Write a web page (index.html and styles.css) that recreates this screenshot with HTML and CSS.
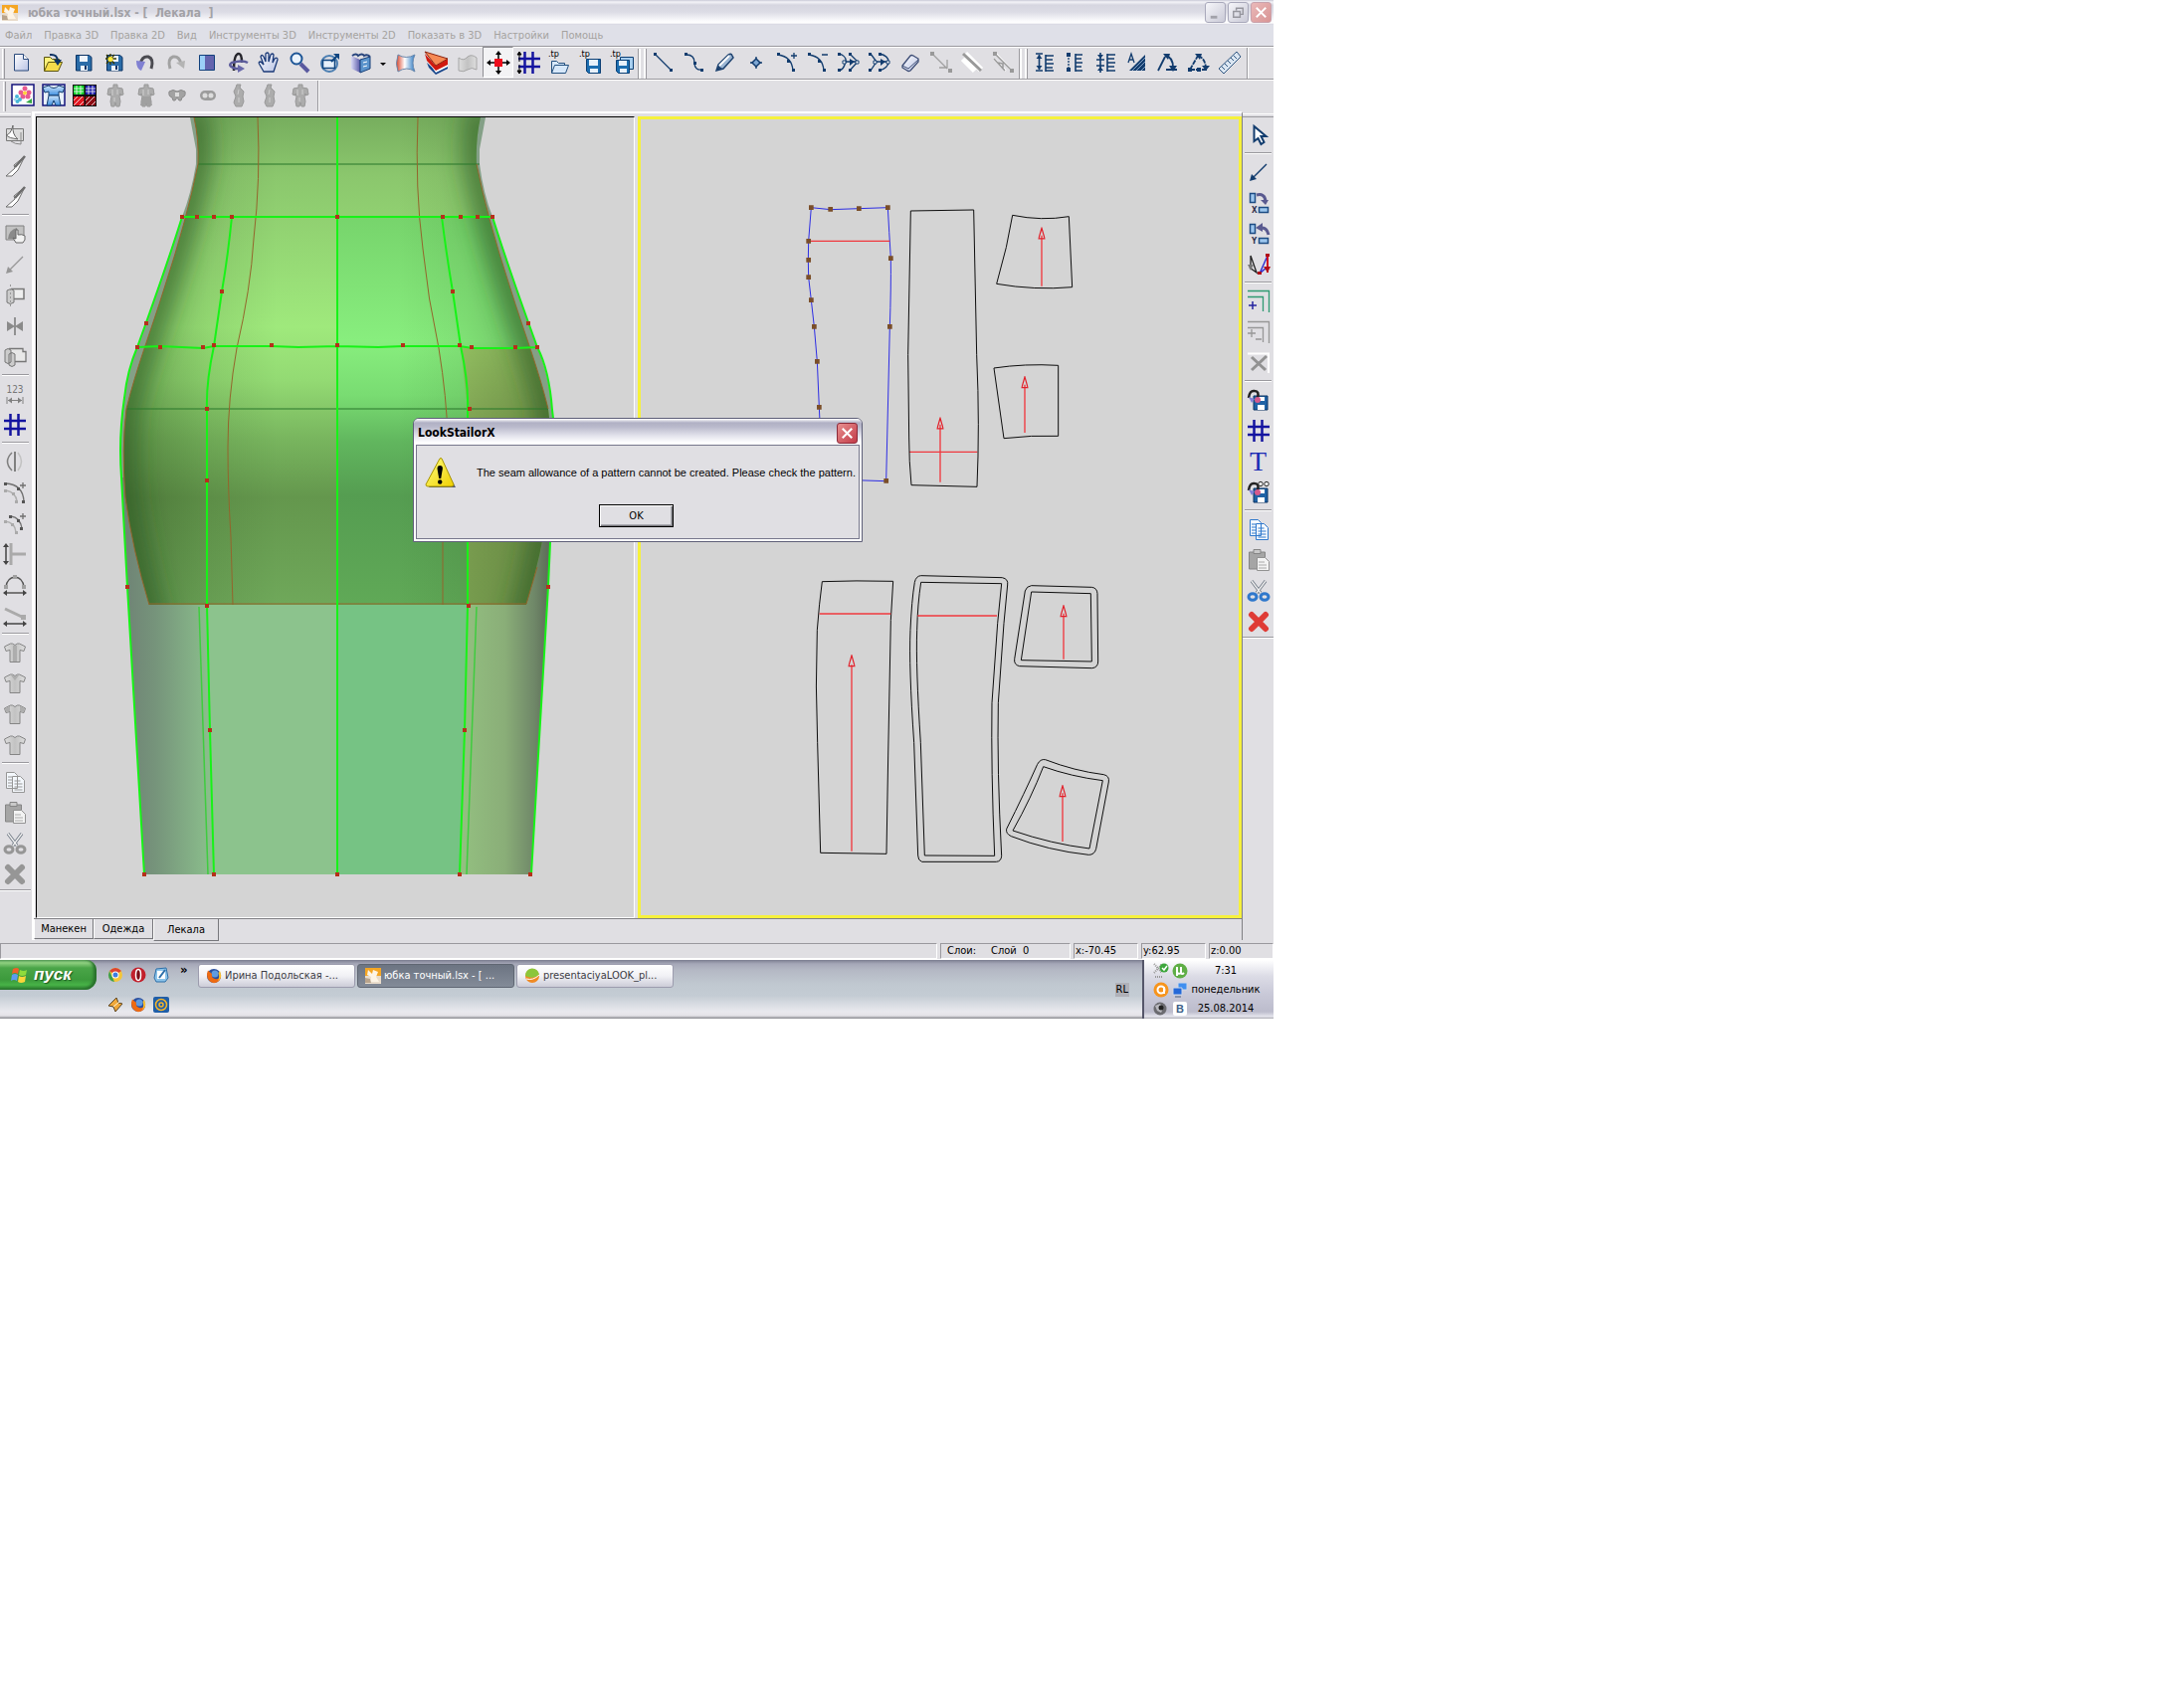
FILE: index.html
```html
<!DOCTYPE html>
<html lang="ru">
<head>
<meta charset="utf-8">
<title>юбка точный.lsx - [ Лекала ]</title>
<link rel="stylesheet" href="styles.css">
</head>
<body>
<svg class="defs" aria-hidden="true">
  <defs>
    <linearGradient id="g-page" x1="0" y1="0" x2="1" y2="1"><stop offset="0" stop-color="#fff"/><stop offset="1" stop-color="#b9c3e4"/></linearGradient>
    <linearGradient id="g-violet" x1="0" y1="0" x2="1" y2="0"><stop offset="0" stop-color="#d8d8f4"/><stop offset="1" stop-color="#5a5aa8"/></linearGradient>
    <linearGradient id="g-heat" x1="0" y1="0" x2="1" y2="0"><stop offset="0" stop-color="#d8452c"/><stop offset=".45" stop-color="#fff"/><stop offset="1" stop-color="#2b78c2"/></linearGradient>
    <linearGradient id="g-blue" x1="0" y1="0" x2="0" y2="1"><stop offset="0" stop-color="#cfe6fb"/><stop offset="1" stop-color="#3f8fe0"/></linearGradient>
    <linearGradient id="g-gray" x1="0" y1="0" x2="1" y2="0"><stop offset="0" stop-color="#dedede"/><stop offset=".5" stop-color="#c2c2c2"/><stop offset="1" stop-color="#dedede"/></linearGradient>
    <linearGradient id="g-warn" x1="0" y1="0" x2="1" y2="1"><stop offset="0" stop-color="#ffff80"/><stop offset="1" stop-color="#f0cf00"/></linearGradient>
  </defs>
  <symbol id="i-floppy" viewBox="0 0 24 24"><path d="M4.500 4.500h13l2.500 2v13.500h-15.500z" fill="#2a6ca8" stroke="#0b3263"/><path d="M8 5h8v6h-8zM9 15h7v5h-7z" fill="#eef4fb"/><path d="M13 15h2v4h-2z" fill="#0b3263"/></symbol>
  <symbol id="i-shirt" viewBox="0 0 24 24"><path d="M1.500 6l6-3h2q2.500 3 5 0h2l6 3-1.500 4.500-4-1V21.500h-10V9.500L3 10.500z" fill="url(#g-gray)" stroke="#858585"/></symbol>
  <symbol id="i-torso" viewBox="0 0 24 24"><path d="M10 1h4v3l5 1 1 6-3 1v-2l-1 3 1 5-1 5h-3l-1-4-1 4H8l-1-5 1-5-1-3v2l-3-1 1-6 5-1z" fill="#acacac" stroke="#989898"/><path d="M9 6v6M14 6v5M11 14v4" stroke="#cfcfcf" fill="none"/></symbol>
  <symbol id="i-side" viewBox="0 0 24 24"><path d="M10 1h4l-1 3 4 4-1 5 1 5-2 5H9l-2-4 2-6-2-5 2-4z" fill="#acacac" stroke="#989898"/><path d="M12 6l-1 5M12 14v5" stroke="#cfcfcf" fill="none"/></symbol>
  <symbol id="i-grid" viewBox="0 0 24 24"><path d="M1 8h22M1 16h22M7.500 1v22M15.500 1v22" stroke="#1414a0" stroke-width="2.500"/></symbol>
  <symbol id="i-arrow" viewBox="0 0 24 24"><path d="M20 4L6 18" stroke="currentColor" stroke-width="1.300"/><path d="M3 21l2-7 5 5z" fill="currentColor"/></symbol>
  <symbol id="i-copy" viewBox="0 0 24 24"><path d="M3.500 2.500h8l3 3v13h-11zM9.500 6.500h8l4 4v12h-12z" fill="#f4f8fd" stroke="currentColor"/><path d="M5 7h4M5 10h4M5 13h4M5 16h4M11.500 11h6M11.500 14h8M11.500 17h8M11.500 20h8" stroke="currentColor"/></symbol>
  <symbol id="i-paste" viewBox="0 0 24 24"><path d="M2.500 4h16v17h-16z" fill="#a5a5a5" stroke="#858585"/><path d="M7 1.500h7v4H7z" fill="#c9c9c9" stroke="#858585"/><path d="M10.500 9.500h8l4 4v9h-12z" fill="#f3f3f3" stroke="#929292"/><path d="M12 14h6M12 17h8M12 20h8" stroke="#aaa"/></symbol>
  <symbol id="i-cut" viewBox="0 0 24 24"><path d="M5 2l9 12M19 2l-9 12" stroke="#6f7884" stroke-width="3"/><path d="M5 2l9 12M19 2l-9 12" stroke="#eee" stroke-width="1.400"/><ellipse cx="6" cy="18" rx="4" ry="3.200" fill="none" stroke="currentColor" stroke-width="3"/><ellipse cx="18" cy="18" rx="4" ry="3.200" fill="none" stroke="currentColor" stroke-width="3"/></symbol>
  <symbol id="i-cross" viewBox="0 0 24 24"><path d="M5 5l14 14M19 5L5 19" stroke="currentColor" stroke-width="6" stroke-linecap="round"/></symbol>
  <symbol id="i-knife" viewBox="0 0 24 24"><path d="M22 2L11 11l1 3-9 8h6l6-6z" fill="#fff" stroke="#6d6d6d"/><path d="M22 2L12 13" stroke="#6d6d6d" stroke-width="2.500"/></symbol>
  <symbol id="i-fox" viewBox="0 0 16 16"><circle cx="8" cy="8" r="7" fill="#2a4f9e"/><circle cx="9" cy="6" r="3.500" fill="#5f9be0"/><path d="M1 6Q1 14 8 15.300q7-.8 7.300-8Q13 12 9 11q-4-1-3-5L2 2.500z" fill="#ee6a12"/><path d="M14 3q3 7-2 10 2-4 .5-8z" fill="#fbc02d"/></symbol>
  <symbol id="i-app" viewBox="0 0 16 16"><path d="M0 0h16v8H0z" fill="#f5a623"/><path d="M0 8h16v8H0z" fill="#e9dccb"/><path d="M3 2l4 4 1-4 5 2-2 5 3 5H5l1-5-4-2z" fill="#fdf4e6"/><path d="M0 10l5 1 1 4H0z" fill="#b9a48c"/></symbol>
  <symbol id="i-seamset" viewBox="0 0 24 24"><path d="M7 8h14v14H7z" fill="#1f62a5" stroke="#0b3263"/><path d="M12 9h6v4h-6zM11 17h7v5h-7z" fill="#fff"/><path d="M2 10Q3 2 8 3q5 0 3 7" stroke="#222" stroke-width="2.500" fill="none"/><path d="M2 9l3 6 3-4z" fill="#8080d8"/><circle cx="11" cy="12" r="3" fill="#d55a8c"/></symbol>
  <symbol id="i-up" viewBox="0 0 24 60"><path d="M12 3L2 38h20z" fill="none" stroke="#e2202a" stroke-width="4"/></symbol>
</svg>

<div class="screen">
<div class="desktop">

  <header class="titlebar">
    <svg class="s16" viewBox="0 0 16 16"><use href="#i-app"/></svg>
    <h1 class="title">юбка точный.lsx - [  Лекала  ]</h1>
    <div class="winbtns">
      <button class="winbtn" aria-label="Свернуть"><svg viewBox="0 0 20 20"><path d="M5 15h7" stroke="#a2a2aa" stroke-width="3"/></svg></button>
      <button class="winbtn" aria-label="Восстановить"><svg viewBox="0 0 20 20"><path d="M8 8V5.500h7V12h-3M5 9h7v6H5z" fill="none" stroke="#96969e" stroke-width="1.500"/></svg></button>
      <button class="winbtn winbtn-close" aria-label="Закрыть"><svg viewBox="0 0 20 20"><path d="M5 5l10 10M15 5L5 15" stroke="#fff" stroke-width="2"/></svg></button>
    </div>
  </header>

  <nav class="menubar">
    <button>Файл</button><button>Правка 3D</button><button>Правка 2D</button><button>Вид</button><button>Инструменты 3D</button><button>Инструменты 2D</button><button>Показать в 3D</button><button>Настройки</button><button>Помощь</button>
  </nav>

  <div class="toolbar" role="toolbar" aria-label="Стандартная">
    <span class="grip"></span>
    <button class="tb" aria-label="Новый"><svg viewBox="0 0 24 24"><path d="M4.500 3.500h9l5 5v11.500h-14z" fill="url(#g-page)" stroke="#2a4a7c"/><path d="M13.500 3.500v5h5" fill="#fff" stroke="#2a4a7c"/></svg></button>
    <button class="tb" aria-label="Открыть"><svg viewBox="0 0 24 24"><path d="M3.500 20V6.500h6l2 2h7v3" fill="#fff27a" stroke="#5b5510"/><path d="M3.500 20.500l4-9h14l-4 9z" fill="#f5dc4a" stroke="#5b5510"/><path d="M9 4q8-1 8 7" fill="none" stroke="#0b3263" stroke-width="2"/><path d="M13 9h8l-4 6z" fill="#0b3263"/></svg></button>
    <button class="tb" aria-label="Сохранить"><svg viewBox="0 0 24 24"><use href="#i-floppy"/></svg></button>
    <button class="tb" aria-label="Сохранить как"><svg viewBox="0 0 24 24"><use href="#i-floppy"/><path d="M8 3v11M3 8h11M4 4l8 9M12 4l-8 9" stroke="#3a3a00" stroke-width="1.300"/><circle cx="8" cy="8.500" r="2.500" fill="#ffe93a"/></svg></button>
    <button class="tb" aria-label="Отменить"><svg viewBox="0 0 24 24"><path d="M7 13Q9 5 15 6q6 2 3 12" fill="none" stroke="#4a4a50" stroke-width="3"/><path d="M3 10l9 1-4 9q-5-2-5-10z" fill="#8080d2"/></svg></button>
    <button class="tb" aria-label="Вернуть"><svg viewBox="0 0 24 24"><path d="M17 13Q15 5 9 6q-6 2-3 12" fill="none" stroke="#a2a2a2" stroke-width="3"/><path d="M21 10l-9 2 8 6z" fill="#b4b4b4"/></svg></button>
    <button class="tb" aria-label="Окна"><svg viewBox="0 0 24 24"><path d="M4.500 4.500h15v15h-15z" fill="#6464ae" stroke="#12407c"/><path d="M5 5h5v14H5z" fill="#9bd0f8"/></svg></button>
    <button class="tb" aria-label="Вращать"><svg viewBox="0 0 24 24"><path d="M8 20Q8 3 13 3q3 0 3 9" fill="none" stroke="#25252c" stroke-width="2.500"/><path d="M22 12q-5-3-16 0-5 3 4 6h4" fill="none" stroke="#5c5c9c" stroke-width="2.500"/><path d="M12 14v8l7-4z" fill="#6868aa"/></svg></button>
    <button class="tb" aria-label="Сдвиг"><svg viewBox="0 0 24 24"><path d="M7 21l-4-7q-2-3 1-3l3 3-3-8q1-3 3 0l2 5V3q2-2 3 0v8l2-7q2-2 3 0l-1 8 2-4q3-2 3 1l-4 12z" fill="url(#g-page)" stroke="#1b3a78" stroke-width="1.300"/></svg></button>
    <button class="tb" aria-label="Масштаб"><svg viewBox="0 0 24 24"><path d="M13 13l8 8" stroke="#59599f" stroke-width="4"/><circle cx="9" cy="8" r="5.500" fill="#eaf3fc" stroke="#1d5596" stroke-width="2"/></svg></button>
    <button class="tb" aria-label="Показать всё"><svg viewBox="0 0 24 24"><circle cx="11" cy="13" r="8" fill="none" stroke="#4c7fb2" stroke-width="2"/><path d="M4.500 9.500h12v8h-12z" fill="#e6f0fb" stroke="#0f4580" stroke-width="1.500"/><path d="M13 11l7-7" stroke="#0f4580" stroke-width="2"/><path d="M15 3h6v6z" fill="#0f4580"/></svg></button>
    <button class="tb" aria-label="Вид модели"><svg viewBox="0 0 24 24"><path d="M2 5l9 4v13l-9-4z" fill="url(#g-violet)"/><path d="M11 9l10-3v12l-10 4z" fill="#5b94cc" stroke="#173f78"/><path d="M3 5q4-3 6 0 4-3 6 0 3-2 6 1" fill="none" stroke="#26437c" stroke-width="2"/><path d="M14 12l4-1M14 16l4-1" stroke="#fff"/></svg></button>
    <button class="tb tb-drop" aria-label="Выбрать вид"><svg viewBox="0 0 14 24"><path d="M4 12h6l-3 3z" fill="#000"/></svg></button>
    <button class="tb" aria-label="Ткань"><svg viewBox="0 0 24 24"><path d="M4 4q8 5 17 0-4 8 0 17-8-6-17 0-3-8 0-17z" fill="url(#g-heat)" stroke="#6a88ac"/></svg></button>
    <button class="tb" aria-label="Слои"><svg viewBox="0 0 24 24"><path d="M2 12l9 8 12-5v3l-12 6L4 17z" fill="#17458a"/><path d="M2 9l9 9 12-5v3l-12 6z" fill="#fff"/><path d="M0 3l11 12 12-7v6l-12 6L2 10z" fill="#d0190f"/><path d="M0 1l23 7-12 7z" fill="#f68a55" stroke="#8c2410"/></svg></button>
    <button class="tb" aria-label="Полотно"><svg viewBox="0 0 24 24"><path d="M3 7q5 4 9-1 4-3 9 1v12q-5-3-9 0-4 3-9 1z" fill="url(#g-gray)" stroke="#a6a6a6"/></svg></button>
    <button class="tb tb-on" aria-label="Точки" aria-pressed="true"><svg viewBox="0 0 24 24"><path d="M12 2v20M2 12h20" stroke="#000" stroke-width="1.500"/><path d="M12 0l3 4H9zM12 24l3-4H9zM0 12l4-3v6zM24 12l-4-3v6z" fill="#000"/><path d="M8 8h8v8H8z" fill="#ee0c1c"/></svg></button>
    <button class="tb" aria-label="Сетка"><svg viewBox="0 0 24 24"><use href="#i-grid"/><path d="M2 2v9M2 14v8M0 4l2-3 2 3zM0 20l2 3 2-3z" stroke="#000" fill="#000"/></svg></button>
    <button class="tb" aria-label="Открыть tp"><svg viewBox="0 0 24 24"><text x="0" y="6" class="tp">.tp</text><path d="M3.500 22V10.500h5l2 2h6v2M3.500 22.500l3-8h14l-3 8z" fill="#d7e8fa" stroke="#23507f"/></svg></button>
    <button class="tb" aria-label="Сохранить tp"><svg viewBox="0 0 24 24"><text x="0" y="6" class="tp">.tp</text><path d="M7.500 8.500h14v14h-12l-2-2z" fill="#1c6eb0" stroke="#0b3f74"/><path d="M10 9h9v6h-9zM11 18h8v4h-8z" fill="#e8f1fa"/></svg></button>
    <button class="tb" aria-label="Сохранить tp как"><svg viewBox="0 0 24 24"><text x="0" y="6" class="tp">.tp</text><path d="M10.500 6.500h13v12h-13z" fill="#a7cff0" stroke="#0b3f74"/><path d="M6.500 9.500h13v13h-11l-2-2z" fill="#1c6eb0" stroke="#0b3f74"/><path d="M9 10h8v5H9zM10 18h7v4h-7z" fill="#e8f1fa"/></svg></button>
    <span class="divider"></span>
    <button class="tb" aria-label="Линия"><svg viewBox="0 0 24 24"><path d="M4 4l15 15" stroke="#123c6e" stroke-width="1.300"/><path d="M2 2h3v3H2zM18 18h3v3h-3z" fill="#123c6e"/></svg></button>
    <button class="tb" aria-label="Кривая"><svg viewBox="0 0 24 24"><path d="M4 4q8 0 8 8t8 7" fill="none" stroke="#123c6e" stroke-width="1.300"/><path d="M2 2h3v3H2zM11 11h3v3h-3zM18 18h3v3h-3z" fill="#123c6e"/></svg></button>
    <button class="tb" aria-label="Карандаш"><svg viewBox="0 0 24 24"><path d="M3 20l2-6L15 4q3-2 4 1l1 2L10 18z" fill="#9cb6d3" stroke="#1c416e" stroke-width="1.500"/><path d="M6 15L16 5" stroke="#fff" stroke-width="2"/><path d="M3 20l2-5 4 3z" fill="#1c416e"/></svg></button>
    <button class="tb" aria-label="Точка"><svg viewBox="0 0 24 24"><path d="M12 6v12M6 12h12" stroke="#123c6e" stroke-width="1.300"/><path d="M12 8l4 4-4 4-4-4z" fill="#7fa8d4" stroke="#123c6e" stroke-width="1.500"/></svg></button>
    <button class="tb" aria-label="Добавить точку"><svg viewBox="0 0 24 24"><path d="M3 4q14 2 15 16M19 2v6M16 5h6" fill="none" stroke="#123c6e" stroke-width="1.300"/><path d="M2 2h3v3H2zM12 9h3v3h-3zM17 18h3v3h-3z" fill="#123c6e"/></svg></button>
    <button class="tb" aria-label="Удалить точку"><svg viewBox="0 0 24 24"><path d="M3 4q14 2 15 16M16 4h6" fill="none" stroke="#123c6e" stroke-width="1.300"/><path d="M2 2h3v3H2zM12 9h3v3h-3zM17 18h3v3h-3z" fill="#123c6e"/></svg></button>
    <button class="tb" aria-label="Соединить"><svg viewBox="0 0 24 24"><path d="M3 3q9 4 5 11-1 4-5 6M13 3l8 8-8 9M8 11h11" fill="none" stroke="#123c6e" stroke-width="1.300"/><path d="M1 2h3v3H1zM1 18h3v3H1zM12 2h3v3h-3zM12 18h3v3h-3zM13 8l5 3-5 4z" fill="#123c6e"/><path d="M6 10h3v3H6zM19 10h3v3h-3z" fill="#fff" stroke="#123c6e"/></svg></button>
    <button class="tb" aria-label="Сгладить"><svg viewBox="0 0 24 24"><path d="M3 3l6 8-6 9M12 3q9 2 9 8t-9 9M8 11h11" fill="none" stroke="#123c6e" stroke-width="1.300"/><path d="M1 2h3v3H1zM1 18h3v3H1zM11 2h3v3h-3zM11 18h3v3h-3zM13 8l5 3-5 4z" fill="#123c6e"/><path d="M6 10h3v3H6zM19 10h3v3h-3z" fill="#fff" stroke="#123c6e"/></svg></button>
    <button class="tb" aria-label="Ластик"><svg viewBox="0 0 24 24"><path d="M4 15l8-10q1-1 3 0l5 3v3l-8 9q-2 1-3 0l-5-3z" fill="url(#g-page)" stroke="#3c4c74" stroke-width="1.300"/><path d="M4 15l6 3 10-9" fill="none" stroke="#3c4c74"/></svg></button>
    <button class="tb" aria-label="Стрелка"><svg viewBox="0 0 24 24"><path d="M4 4l14 14M10 17h8v-8" fill="none" stroke="#a0a0a0" stroke-width="1.300"/><path d="M1 1h4v4H1zM19 18h4v4h-4z" fill="#999"/></svg></button>
    <button class="tb" aria-label="Отрезок"><svg viewBox="0 0 24 24"><path d="M5 3l16 16M3 8l12 12" stroke="#fff" stroke-width="6"/><path d="M3 3l18 17" stroke="#999" stroke-width="3"/></svg></button>
    <button class="tb" aria-label="Параллель"><svg viewBox="0 0 24 24"><path d="M5 3l16 17M3 8l12 12" stroke="#fff" stroke-width="2"/><path d="M4 3l17 17M3 8l11 12M7 12l5 1v5" fill="none" stroke="#999" stroke-width="1.500"/><path d="M2 1h4v4H2zM19 18h4v4h-4z" fill="#999"/></svg></button>
    <span class="divider"></span>
    <button class="tb" aria-label="Длина"><svg viewBox="0 0 24 24"><path d="M3 3h7M3 20h7M6.500 4v15M13 4v17M13 5h8M13 9h7M13 13h8M13 17h7M13 20h8" stroke="#123c6e" stroke-width="1.600"/><path d="M3.500 8l3-4 3 4zM3.500 15l3 4 3-4z" fill="#123c6e"/></svg></button>
    <button class="tb" aria-label="Расстояние"><svg viewBox="0 0 24 24"><path d="M5 4v15" stroke="#123c6e" stroke-width="1.300" stroke-dasharray="2 1"/><path d="M3 2h4v4H3zM3 17h4v4H3z" fill="#123c6e"/><path d="M12 3v18M12 4h7M12 8h6M12 12h7M12 16h6M12 20h7" stroke="#123c6e" stroke-width="1.600"/></svg></button>
    <button class="tb" aria-label="Разница"><svg viewBox="0 0 24 24"><path d="M2 9h8M2 15h8M6 2v20M13 3v18M13 4h8M13 8h7M13 12h8M13 16h7M13 20h8" stroke="#123c6e" stroke-width="1.600"/><path d="M3 4l3 4 3-4zM3 20l3-4 3 4z" fill="#123c6e"/></svg></button>
    <button class="tb" aria-label="Площадь"><svg viewBox="0 0 24 24"><path d="M20 4v16H4z" fill="#123c6e"/><path d="M11 20l9-9M7 20L20 7M16 20l4-4" stroke="#86a5c8"/><path d="M3 12l3-9 3 9M4 9h4" fill="none" stroke="#123c6e" stroke-width="1.300"/></svg></button>
    <button class="tb" aria-label="Угол"><svg viewBox="0 0 24 24"><path d="M2 20L9 6M10 19h11M9 5q8 1 8 12" fill="none" stroke="#123c6e" stroke-width="1.800"/><path d="M7 3l7 0-2 6zM13 15h8l-4 6z" fill="#123c6e"/></svg></button>
    <button class="tb" aria-label="Сумма углов"><svg viewBox="0 0 24 24"><path d="M3 19L11 5M3 19h18M11 5q7 2 8 12" fill="none" stroke="#123c6e" stroke-width="1.800" stroke-dasharray="5 1"/><path d="M8 3h7l-2 6zM15 15h8l-4 5zM1 17h4v4H1zM10 17h4v4h-4z" fill="#123c6e"/></svg></button>
    <button class="tb" aria-label="Линейка"><svg viewBox="0 0 24 24"><path d="M1 18L19 1l4 5L6 23z" fill="#dbe6f2" stroke="#2f5680"/><path d="M4 16l3 3M7 13l3 3M10 10l3 3M13 7l3 3M16 5l3 3" stroke="#2f5680"/></svg></button>
    <span class="edge"></span>
  </div>

  <div class="toolbar toolbar-second" role="toolbar" aria-label="Отображение">
    <span class="grip"></span>
    <button class="tb" aria-label="Текстура"><svg viewBox="0 0 24 24"><path d="M1 1h22v21H1z" fill="#fff" stroke="#14147c" stroke-width="1.500"/><circle cx="14" cy="5" r="2.500" fill="#e85a90"/><circle cx="18" cy="9" r="2.500" fill="#e85a90"/><circle cx="10" cy="9" r="2.500" fill="#e85a90"/><circle cx="17" cy="13" r="2.500" fill="#e85a90"/><circle cx="12" cy="13" r="2.500" fill="#e85a90"/><circle cx="14" cy="9.500" r="2" fill="#ffd23a"/><circle cx="6" cy="13" r="2" fill="#48b6d8"/><circle cx="9" cy="16" r="2" fill="#48b6d8"/><circle cx="4" cy="16" r="1.500" fill="#9fd8ec"/><circle cx="6.500" cy="18" r="2" fill="#48b6d8"/><path d="M15 19l6-4v5z" fill="#35a845"/></svg></button>
    <button class="tb" aria-label="Костюм"><svg viewBox="0 0 24 24"><path d="M1 1h22v21H1z" fill="#e9f1fa" stroke="#14147c" stroke-width="1.500"/><path d="M1 4l6-2q5 5 10 0l6 2-2 5-4-1v4H7V8L3 9z" fill="url(#g-blue)" stroke="#123c6e"/><path d="M7 12h10l2 10h-5l-2-5-2 5H5z" fill="url(#g-blue)" stroke="#123c6e"/></svg></button>
    <button class="tb" aria-label="Сетки"><svg viewBox="0 0 24 24"><path d="M0 1h24v22H0z" fill="#111"/><path d="M1 2h10.500v9H1z" fill="#12d42a"/><path d="M13 2h10v9H13z" fill="#1c1ca8"/><path d="M1 13h10.500v9H1z" fill="#e01822"/><path d="M13 13h10v9H13z" fill="#8c0c14"/><path d="M4 2v9M8 2v9M1 5h10M1 8h10M16 2v9M20 2v9M13 5h10M13 8h10M1 17l4-4M1 22l9-9M7 22l4-4M13 17l4-4M13 22l9-9M19 22l4-4" stroke="#fff" stroke-width=".8"/></svg></button>
    <button class="tb" aria-label="Спереди"><svg viewBox="0 0 24 24"><use href="#i-torso"/></svg></button>
    <button class="tb" aria-label="Сзади"><svg viewBox="0 0 24 24"><use href="#i-torso"/><path d="M8 13h8l2 9h-4l-2-3-2 3H6z" fill="#a0a0a0"/></svg></button>
    <button class="tb" aria-label="Сверху"><svg viewBox="0 0 24 24"><path d="M4 8q4-3 8 0 4-3 8 0 1 5-3 6l-1 3h-2l-2-3-2 3H8l-1-3q-4-1-3-6z" fill="#a2a2a2" stroke="#8b8b8b"/><path d="M10 9h4v4h-4z" fill="#ddd"/></svg></button>
    <button class="tb" aria-label="Снизу"><svg viewBox="0 0 24 24"><rect x="4" y="7" width="16" height="10" rx="5" fill="#9c9c9c"/><circle cx="9" cy="12" r="2.500" fill="#ddd"/><circle cx="15" cy="12" r="2.500" fill="#ddd"/></svg></button>
    <button class="tb" aria-label="Слева"><svg viewBox="0 0 24 24"><use href="#i-side"/></svg></button>
    <button class="tb" aria-label="Справа"><svg viewBox="0 0 24 24"><use href="#i-side"/></svg></button>
    <button class="tb" aria-label="Изометрия"><svg viewBox="0 0 24 24"><use href="#i-torso"/></svg></button>
    <span class="edge"></span>
  </div>

  <div class="work">
    <div class="sidebar sidebar-left" role="toolbar" aria-label="Инструменты 3D">
      <span class="sgrip"></span>
      <button class="tb" aria-label="Плоскость"><svg viewBox="0 0 24 24"><path d="M3.500 5.500h17v12h-17z" fill="#ddd" stroke="#777"/><path d="M10 2q-1 9 5 14-9-1-12-4 5-1 7-10z" fill="#fff" stroke="#666"/><path d="M8 18q4 3 10 3V9" fill="none" stroke="#888"/></svg></button>
      <button class="tb" aria-label="Нож"><svg viewBox="0 0 24 24"><use href="#i-knife"/></svg></button>
      <button class="tb" aria-label="Нож 2"><svg viewBox="0 0 24 24"><use href="#i-knife"/></svg></button>
      <hr>
      <button class="tb" aria-label="Захват"><svg viewBox="0 0 24 24"><path d="M3 4h18v14H3z" fill="#c2c2c2" stroke="#808080"/><path d="M5 17q1-9 9-11v11z" fill="#8a8a8a"/><path d="M13 21l-3-5 3 1V8h2v5q4-1 7 1v4l-2 3z" fill="#f2f2f2" stroke="#666"/></svg></button>
      <button class="tb gray" aria-label="Направление"><svg viewBox="0 0 24 24"><use href="#i-arrow"/></svg></button>
      <button class="tb" aria-label="Развернуть"><svg viewBox="0 0 24 24"><path d="M8 5.500h13v10H11" fill="#eee" stroke="#777" stroke-width="1.500"/><path d="M4 7q4-3 7 0v12q-4 3-7 0z" fill="#ccc" stroke="#777"/><path d="M7.500 1v22" stroke="#999" stroke-dasharray="2 2"/></svg></button>
      <button class="tb" aria-label="Отразить"><svg viewBox="0 0 24 24"><path d="M12 3v18" stroke="#777" stroke-width="1.500"/><path d="M4 7l8 5-8 5zM20 7l-8 5 8 5z" fill="#8a8a8a"/></svg></button>
      <button class="tb" aria-label="Развернуть всё"><svg viewBox="0 0 24 24"><path d="M6 3.500h14v3h3v10H10" fill="#e8e8e8" stroke="#777" stroke-width="1.300"/><path d="M2 5q3-3 6 0v12q-3 3-6 0zM6 9q3-3 6 0v11q-3 3-6 0z" fill="#ccc" stroke="#777"/></svg></button>
      <hr>
      <button class="tb" aria-label="Размер"><svg viewBox="0 0 24 24"><text x="12" y="11" class="num">123</text><path d="M4 15v7M20 15v7M5 18.500h14" stroke="#808080"/><path d="M5 18.500l4-3v6zM19 18.500l-4-3v6z" fill="#808080"/></svg></button>
      <button class="tb" aria-label="Сетка 3D"><svg viewBox="0 0 24 24"><use href="#i-grid"/></svg></button>
      <hr>
      <button class="tb" aria-label="Симметрия"><svg viewBox="0 0 24 24"><path d="M12 2v20" stroke="#808080" stroke-width="2"/><path d="M9 3q-9 9 0 18" fill="none" stroke="#808080" stroke-width="1.500"/><path d="M15 3q7 9 0 18" fill="none" stroke="#c2c2c2" stroke-width="1.500"/></svg></button>
      <button class="tb" aria-label="Точка на кривой"><svg viewBox="0 0 24 24"><path d="M3 3q17 1 18 18M17 5h6M20 2v6" fill="none" stroke="#707070" stroke-width="1.300"/><path d="M3 10q10 2 11 11" fill="none" stroke="#b0b0b0" stroke-width="1.500"/><path d="M1 2h3v3H1zM14 7h3v3h-3zM19 20h3v3h-3z" fill="#555"/><path d="M1 9h3v3H1zM9 12h3v3H9zM12 20h3v3h-3z" fill="#aaa"/></svg></button>
      <button class="tb" aria-label="Точка внутри"><svg viewBox="0 0 24 24"><path d="M8 5q9 1 11 12M17 5h6M20 2v6" fill="none" stroke="#707070" stroke-width="1.300"/><path d="M2 10q10 1 11 11" fill="none" stroke="#b0b0b0" stroke-width="1.500"/><path d="M6 4h3v3H6zM14 8h3v3h-3zM17 16h3v3h-3z" fill="#555"/><path d="M1 9h3v3H1zM8 12h3v3H8zM12 20h3v3h-3z" fill="#aaa"/></svg></button>
      <button class="tb" aria-label="Сдвиг по высоте"><svg viewBox="0 0 24 24"><path d="M8 1v22M8 12h15" stroke="#aaa" stroke-width="3"/><path d="M3 3v18" stroke="#444" stroke-width="1.500"/><path d="M0 5l3-4 3 4zM0 19l3 4 3-4z" fill="#444"/></svg></button>
      <button class="tb" aria-label="Дуга"><svg viewBox="0 0 24 24"><path d="M3 14q1-9 9-10 8 1 9 10M2 20h20" fill="none" stroke="#555" stroke-width="1.300"/><path d="M1 12h4v4H1zM10 2h4v4h-4zM19 12h4v4h-4z" fill="#a0a0a0"/><path d="M0 20l4-3v6zM24 20l-4-3v6z" fill="#444"/></svg></button>
      <button class="tb" aria-label="Прямая"><svg viewBox="0 0 24 24"><path d="M2 5l19 9" stroke="#aaa" stroke-width="3"/><path d="M18 11h5v5h-5z" fill="#aaa"/><path d="M2 20h20" stroke="#444" stroke-width="1.500"/><path d="M0 20l4-3v6zM24 20l-4-3v6z" fill="#444"/></svg></button>
      <hr>
      <button class="tb" aria-label="Одежда 1"><svg viewBox="0 0 24 24"><use href="#i-shirt"/><path d="M10 5h4v16h-4z" fill="#adadad"/></svg></button>
      <button class="tb" aria-label="Одежда 2"><svg viewBox="0 0 24 24"><use href="#i-shirt"/><path d="M7.500 3l4.500 6 4.500-6-4.500 2z" fill="#adadad"/></svg></button>
      <button class="tb" aria-label="Одежда 3"><svg viewBox="0 0 24 24"><use href="#i-shirt"/><path d="M2 6l5-2.500V9l-4 1z" fill="#adadad"/><path d="M22 6l-5-2.500V9l4 1z" fill="#adadad"/></svg></button>
      <button class="tb" aria-label="Одежда 4"><svg viewBox="0 0 24 24"><use href="#i-shirt"/></svg></button>
      <hr>
      <button class="tb gray" aria-label="Копировать 3D"><svg viewBox="0 0 24 24"><use href="#i-copy"/></svg></button>
      <button class="tb" aria-label="Вставить 3D"><svg viewBox="0 0 24 24"><use href="#i-paste"/></svg></button>
      <button class="tb gray" aria-label="Вырезать 3D"><svg viewBox="0 0 24 24"><use href="#i-cut"/></svg></button>
      <button class="tb gray" aria-label="Удалить 3D"><svg viewBox="0 0 24 24"><use href="#i-cross"/></svg></button>
      <span class="sedge"></span>
    </div>

    <main class="center">
      <div class="views">
        <svg class="view view-3d" viewBox="37 118 600 804" role="img" aria-label="3D модель юбки">
          <defs>
            <linearGradient id="b-left" gradientUnits="userSpaceOnUse" x1="0" y1="118" x2="0" y2="608">
              <stop offset="0" stop-color="#77ae5e"/><stop offset=".12" stop-color="#8bc76d"/><stop offset=".43" stop-color="#9fe97c"/><stop offset=".54" stop-color="#93da73"/><stop offset=".66" stop-color="#78b55e"/><stop offset=".78" stop-color="#64974d"/><stop offset="1" stop-color="#6fa85a"/>
            </linearGradient>
            <linearGradient id="b-right" gradientUnits="userSpaceOnUse" x1="0" y1="218" x2="0" y2="608">
              <stop offset="0" stop-color="#77d46c"/><stop offset=".32" stop-color="#88ee7e"/><stop offset=".46" stop-color="#79dc72"/><stop offset=".58" stop-color="#61b65e"/><stop offset=".72" stop-color="#559d51"/><stop offset="1" stop-color="#60a957"/>
            </linearGradient>
            <linearGradient id="b-olive" gradientUnits="userSpaceOnUse" x1="0" y1="349" x2="0" y2="608">
              <stop offset="0" stop-color="#9ac766"/><stop offset=".4" stop-color="#83a455"/><stop offset="1" stop-color="#7fa554"/>
            </linearGradient>
            <linearGradient id="s-left" gradientUnits="userSpaceOnUse" x1="125" y1="0" x2="215" y2="0">
              <stop offset="0" stop-color="#6f8375"/><stop offset=".35" stop-color="#76947b"/><stop offset="1" stop-color="#8cc18d"/>
            </linearGradient>
            <linearGradient id="s-right" gradientUnits="userSpaceOnUse" x1="465" y1="0" x2="550" y2="0">
              <stop offset="0" stop-color="#93bf80"/><stop offset=".5" stop-color="#8aae78"/><stop offset=".85" stop-color="#6f8768"/><stop offset="1" stop-color="#5f705a"/>
            </linearGradient>
            <linearGradient id="b-shade" gradientUnits="userSpaceOnUse" x1="124" y1="0" x2="554" y2="0">
              <stop offset="0" stop-color="#1d3a10" stop-opacity=".34"/><stop offset=".2" stop-color="#1d3a10" stop-opacity=".1"/><stop offset=".36" stop-color="#1d3a10" stop-opacity="0"/><stop offset=".64" stop-color="#1d3a10" stop-opacity="0"/><stop offset=".8" stop-color="#1d3a10" stop-opacity=".08"/><stop offset="1" stop-color="#1d3a10" stop-opacity=".3"/>
            </linearGradient>
            <filter id="soft" x="-20%" y="-20%" width="140%" height="140%"><feGaussianBlur stdDeviation="11"/></filter>
            <path id="body-shape" d="M195 118Q200 140 199 165Q188 220 165 290C152 332 137 370 127 411Q122 450 126 500Q133 552 150 608H529Q546 552 552 500Q556 450 551 411C541 370 526 332 513 290Q490 220 479 165Q478 140 483 118z"/>
            <clipPath id="body-clip"><use href="#body-shape"/></clipPath>
          </defs>
          <path d="M191 118L197 150V165Q192 195 183 218L147 324 138 349Q128 372 125 400 119 440 122 480L128 590 145 879H534L551 590 556 480Q559 430 553 395 549 370 540 349L531 324 495 218Q486 195 482 165V150L488 118z" fill="#84a087"/>
          <path d="M122 480L128 590 145 879H215L208 600V480z" fill="url(#s-left)"/>
          <path d="M208 600L215 879H339V600z" fill="#8cc38d"/>
          <path d="M339 600V879H462L470 600z" fill="#76c384"/>
          <path d="M470 480V600L462 879H534L551 590 556 480z" fill="url(#s-right)"/>
          <g clip-path="url(#body-clip)">
            <path d="M110 118H570V610H110z" fill="url(#b-left)"/>
            <path d="M339 218H550V349H463L470 411V608H339z" fill="url(#b-right)"/>
            <path d="M463 349H560V608H470V411z" fill="url(#b-olive)"/>
            <path d="M110 118H570V610H110z" fill="url(#b-shade)"/>
            <path d="M195 110Q200 140 199 165Q188 220 165 290C152 332 137 370 127 411Q122 450 126 500Q133 552 155 630M524 630Q546 552 552 500Q556 450 551 411C541 370 526 332 513 290Q490 220 479 165Q478 140 483 110" fill="none" stroke="#2e5a28" stroke-opacity=".62" stroke-width="28" filter="url(#soft)"/>
          </g>
          <path d="M199 165H482M127 411H551" stroke="#28762a" fill="none"/>
          <path d="M259 118Q262 180 255 240 252 290 238 350 229 400 229 450 229 490 232 540L234 608M420 118Q417 190 425 250 430 300 441 350 449 400 450 440 450 500 445 545V608M195 118Q200 140 199 165Q188 220 165 290C152 332 137 370 127 411Q122 450 126 500Q133 552 150 608M479 165Q490 220 513 290C526 332 541 370 551 411M150 607H529L540 570" stroke="#94652c" fill="none"/>
          <path d="M200 610L209 879M479 610L469 879" stroke="#3fcc3f" stroke-width="1.500" fill="none"/>
          <path d="M339 118V879M183 218H495M138 349L161 348 204 350 215 348 273 348 300 349 339 348 380 349 405 348 462 348 475 350 518 350 540 349M233 218Q229 258 223 293L215 348Q207 385 208 411V609L211 734 215 879M444 218Q449 258 455 293L463 348Q471 385 470 411V609L467 734 462 879M183 218Q170 260 147 324L138 349Q128 372 125 400 119 440 122 480L128 590 145 879M495 218Q508 260 531 324L540 349Q552 372 555 412 559 440 556 480L551 590 534 879" stroke="#17f317" stroke-width="2" fill="none"/>
          <path class="knots" d="M183 218h0M198 218h0M215 218h0M233 218h0M339 218h0M445 218h0M463 218h0M480 218h0M495 218h0M138 349h0M161 349h0M204 349h0M215 347h0M273 347h0M339 347h0M405 347h0M462 347h0M474 349h0M518 349h0M540 349h0M223 293h0M455 293h0M147 325h0M531 325h0M208 411h0M472 411h0M208 483h0M128 590h0M551 590h0M208 609h0M471 609h0M211 734h0M467 734h0M145 879h0M215 879h0M339 879h0M462 879h0M533 879h0"/>
        </svg>
        <svg class="view view-2d" viewBox="644 120 601 800" role="img" aria-label="Лекала">
          <g transform="translate(780 180) scale(.33333)" fill="none" stroke-width="3">
            <path d="M106 86L164 92 250 89 337 86Q341 160 346 239 347 330 343 445L332 911 140 905 130 688 124 550 115 445 106 365 98 296 97 244 98 187z" stroke="#2c2ce4"/>
            <path d="M98 187H343M402 823H607M495 740V914M801 170V323M750 620V765" stroke="#f0383e" stroke-width="4"/>
            <path class="notes" d="M106 86h.1M164 91h.1M250 89h.1M337 86h.1M98 187h.1M98 244h.1M98 296h.1M106 365h.1M115 445h.1M124 550h.1M130 688h.1M346 239h.1M343 445h.1M332 910h.1"/>
            <path d="M406 96L596 93 605 530Q610 640 610 740 610 840 606 928L408 923Q401 850 401 780L398 530zM713 109Q800 127 883 113L893 326Q780 336 665 316L694 206zM657 570Q750 556 851 562V775Q770 772 687 782z" stroke="#0c0c0c"/>
            <use href="#i-up" x="484" y="718" width="22" height="55"/><use href="#i-up" x="790" y="145" width="22" height="55"/><use href="#i-up" x="739" y="594" width="22" height="55"/>
          </g>
          <g transform="translate(780 560) scale(.33333)" fill="none" stroke-width="3">
            <path d="M139 74Q240 70 353 73L346 190 338 600 333 895 134 892 125 560Q118 390 124 220 130 140 139 74z" stroke="#0c0c0c"/>
            <path d="M437 76L680 80 668 200 651 440Q648 640 659 901L448 900 436 560Q421 330 425 220 427 140 437 76zM770 105L949 110 952 315 739 311zM806 632Q890 662 985 674L945 879Q830 865 714 825 770 725 806 632z" stroke="#0c0c0c"/>
            <path d="M437 56L682 62Q701 66 698 84L687 200 670 440Q666 640 680 901 679 918 664 919L440 919Q428 915 428 900L416 560Q400 330 405 220 409 130 418 76 422 57 437 56zM770 86L952 91Q968 93 969 110L971 315Q971 333 953 335L734 329Q717 325 719 308L751 102Q755 88 770 86zM812 611Q900 645 988 656 1006 660 1003 678L965 880Q960 898 943 898 820 885 709 842 692 834 695 820 750 710 788 625 797 608 812 611z" stroke="#0c0c0c"/>
            <path d="M131 171H346M427 177H666M228 325V887M867 170V308M864 712V858" stroke="#f0383e" stroke-width="4"/>
            <use href="#i-up" x="217" y="294" width="22" height="55"/><use href="#i-up" x="856" y="144" width="22" height="55"/><use href="#i-up" x="853" y="687" width="22" height="55"/>
          </g>
        </svg>
      </div>
      <div class="tabs" role="tablist">
        <button role="tab" class="tab">Манекен</button><button role="tab" class="tab">Одежда</button><button role="tab" class="tab tab-on" aria-selected="true">Лекала</button>
      </div>
    </main>

    <div class="sidebar sidebar-right" role="toolbar" aria-label="Инструменты 2D">
      <span class="sgrip"></span>
      <button class="tb" aria-label="Выбор"><svg viewBox="0 0 24 24"><path d="M7.500 3v15l4-3 3 6 3-2-3-6h5z" fill="#fff" stroke="#123c6e" stroke-width="2"/></svg></button>
      <hr>
      <button class="tb navy" aria-label="Нить основы"><svg viewBox="0 0 24 24"><use href="#i-arrow"/></svg></button>
      <button class="tb" aria-label="Отразить X"><svg viewBox="0 0 24 24"><path d="M3.500 2.500h5v9h-5zM12.500 16.500h9v5h-9z" fill="#9cc6ee" stroke="#1d4c84" stroke-width="1.500"/><path d="M10 4q8-2 9 6" fill="none" stroke="#5a5a90" stroke-width="3"/><path d="M14 9h8l-3 5z" fill="#5a5a90"/><text x="5" y="22" class="axis">X</text></svg></button>
      <button class="tb" aria-label="Отразить Y"><svg viewBox="0 0 24 24"><path d="M3.500 2.500h5v9h-5zM12.500 16.500h9v5h-9z" fill="#9cc6ee" stroke="#1d4c84" stroke-width="1.500"/><path d="M14 6q6-1 8 7" fill="none" stroke="#5a5a90" stroke-width="3"/><path d="M9 6l7-5v9z" fill="#5a5a90"/><text x="5" y="22" class="axis">Y</text></svg></button>
      <button class="tb" aria-label="Поворот"><svg viewBox="0 0 24 24"><path d="M4 3l6 17-7-5M4 3v11" fill="none" stroke="#222" stroke-width="1.300"/><path d="M1 12h6l-3 6z" fill="#777"/><path d="M21 3L13 21l8-7" fill="none" stroke="#3030d0" stroke-width="1.500"/><path d="M21 3v17" stroke="#d01020" stroke-width="2"/><path d="M17 14h7l-3 6zM19 1h4v3h-4zM11 19h4v3h-4z" fill="#b00c18"/></svg></button>
      <hr>
      <button class="tb" aria-label="Добавить припуск"><svg viewBox="0 0 24 24"><path d="M1 1.500h21.500V23" fill="none" stroke="#2f9a72" stroke-width="1.300"/><path d="M1 7.500h15.500V22" fill="none" stroke="#2f9a72" stroke-width="1.300"/><path d="M6 12v8M2 16h8" stroke="#2424a0" stroke-width="1.500"/></svg></button>
      <button class="tb" aria-label="Изменить припуск"><svg viewBox="0 0 24 24"><path d="M1 1.500h21.500V23M1 7.500h15.500V22M5 9v8M1 13h8M9 19h6" fill="none" stroke="#979797" stroke-width="1.300"/></svg></button>
      <button class="tb" aria-label="Удалить припуск"><svg viewBox="0 0 24 24"><path d="M1 2.500h21V22" fill="none" stroke="#fff" stroke-width="2"/><path d="M5 6l14 13M20 5L5 19" stroke="#929292" stroke-width="3"/></svg></button>
      <hr>
      <button class="tb" aria-label="Швы"><svg viewBox="0 0 24 24"><use href="#i-seamset"/></svg></button>
      <button class="tb" aria-label="Сетка 2D"><svg viewBox="0 0 24 24"><use href="#i-grid"/></svg></button>
      <button class="tb tb-text" aria-label="Текст">T</button>
      <button class="tb" aria-label="Швы 2"><svg viewBox="0 0 24 24"><use href="#i-seamset"/><circle cx="14" cy="3.500" r="2.200" fill="#fff" stroke="#222"/><circle cx="20" cy="3.500" r="2.200" fill="#fff" stroke="#222"/></svg></button>
      <hr>
      <button class="tb blue" aria-label="Копировать"><svg viewBox="0 0 24 24"><use href="#i-copy"/></svg></button>
      <button class="tb" aria-label="Вставить"><svg viewBox="0 0 24 24"><use href="#i-paste"/></svg></button>
      <button class="tb blue" aria-label="Вырезать"><svg viewBox="0 0 24 24"><use href="#i-cut"/></svg></button>
      <button class="tb red" aria-label="Удалить"><svg viewBox="0 0 24 24"><use href="#i-cross"/></svg></button>
      <span class="sedge"></span>
    </div>
  </div>

  <div class="status">
    <span class="cell cell-wide"></span>
    <span class="cell cell-layer"><span>Слои:</span><span>Слой  0</span></span>
    <span class="cell cell-pos">x:-70.45</span>
    <span class="cell cell-pos">y:62.95</span>
    <span class="cell cell-pos">z:0.00</span>
  </div>

  <footer class="taskbar">
    <button class="start">
      <svg viewBox="0 0 20 20"><path d="M3 4q4-2 6 0l-1 5q-3-2-6 0z" fill="#f0602a"/><path d="M10 5q4 2 7 0l-1 5q-4 2-7 0z" fill="#8fdc3c"/><path d="M2 10q3-2 6 0l-1 6q-3-2-6 0z" fill="#5c9cf0"/><path d="M9 11q3 2 7 0l-1 6q-4 2-7 0z" fill="#fbd63a"/></svg>
      пуск
    </button>
    <div class="quick">
      <button aria-label="Chrome"><svg viewBox="0 0 16 16"><circle cx="8" cy="8" r="7" fill="#f4c63a"/><path d="M8 8L2 4q6-6 12 0z" fill="#dc4333"/><path d="M2 4l5 11Q1 14 1 8z" fill="#3c9f50"/><circle cx="8" cy="8" r="3.500" fill="#fff"/><circle cx="8" cy="8" r="2.500" fill="#3d7de0"/></svg></button>
      <button aria-label="Opera"><svg viewBox="0 0 16 16"><circle cx="8" cy="8" r="7.500" fill="#c2202c"/><ellipse cx="8" cy="8" rx="2.500" ry="5.500" fill="#7c0e18" stroke="#fff" stroke-width="1.500"/></svg></button>
      <button aria-label="Рабочий стол"><svg viewBox="0 0 16 16"><path d="M3 2l10-1 2 10-3 4H3L1 11z" fill="#8cc4ea" stroke="#2d6fa8"/><path d="M4 4h8v8H4z" fill="#fff"/><path d="M6 11l6-8" stroke="#2d6fa8" stroke-width="2"/></svg></button>
      <span class="more">»</span>
      <button aria-label="Winamp"><svg viewBox="0 0 16 16"><path d="M9 1l2 5 4 1-7 8-2-5-5-1z" fill="#f0a83a" stroke="#5b4420"/><path d="M6 10l6-5" stroke="#fff6d8"/></svg></button>
      <button aria-label="Firefox"><svg viewBox="0 0 16 16"><use href="#i-fox"/></svg></button>
      <button aria-label="Mail"><svg viewBox="0 0 16 16"><rect width="16" height="16" rx="2" fill="#1f5ea8"/><circle cx="8" cy="8" r="5.500" fill="none" stroke="#f5b52a" stroke-width="1.500"/><circle cx="8" cy="8" r="2" fill="none" stroke="#f5b52a" stroke-width="1.500"/></svg></button>
    </div>
    <div class="tasks">
      <button class="task"><svg viewBox="0 0 16 16"><use href="#i-fox"/></svg>Ирина Подольская -...</button>
      <button class="task task-on"><svg viewBox="0 0 16 16"><use href="#i-app"/></svg>юбка точный.lsx - [ ...</button>
      <button class="task"><svg viewBox="0 0 16 16"><circle cx="8" cy="8" r="7" fill="#f08a24"/><path d="M1 8a7 7 0 0 1 14-1Q8 12 1 8z" fill="#8cc63a"/><path d="M2 11q7 2 13-4" fill="none" stroke="#fff"/></svg>presentaciyaLOOK_pl...</button>
    </div>
    <span class="lang">RL</span>
    <div class="tray">
      <div class="trayicons">
        <svg viewBox="0 0 16 16"><path d="M1 1l8 9M1 10l8-9M2 14h8" stroke="#999" stroke-width="2" stroke-dasharray="1 1"/><circle cx="11" cy="5" r="4.500" fill="#3da63c"/><path d="M9 5l2 2 3-4" fill="none" stroke="#fff" stroke-width="1.500"/></svg>
        <svg viewBox="0 0 16 16"><circle cx="8" cy="8" r="7.500" fill="#5fae46"/><path d="M5 4v5q1 3 4 1V4M9 10q1 2 3 0M5 9v4" fill="none" stroke="#fff" stroke-width="2"/></svg>
        <svg viewBox="0 0 16 16"><circle cx="8" cy="8" r="7.500" fill="#f7941d"/><circle cx="8" cy="8" r="3.500" fill="none" stroke="#fff" stroke-width="2"/><path d="M11 5v7" stroke="#fff" stroke-width="2"/></svg>
        <svg viewBox="0 0 16 16"><path d="M6 1h9v7H6z" fill="#3f8ff0" stroke="#cfd8e8"/><path d="M1 6h9v7H1z" fill="#2468d8" stroke="#cfd8e8"/><path d="M3 15h6" stroke="#8893a8" stroke-width="2"/></svg>
        <svg viewBox="0 0 16 16"><circle cx="7" cy="8" r="6.500" fill="#6b6b70"/><path d="M2 5l5-2q4 4 1 9l-4-2z" fill="#b8b8be"/><circle cx="8" cy="7" r="2.500" fill="#222"/></svg>
        <svg viewBox="0 0 16 16"><rect x="1" y="1" width="14" height="14" rx="2" fill="#fff"/><text x="8" y="12" class="vk">B</text></svg>
      </div>
      <div class="clock"><span>7:31</span><span>понедельник</span><span>25.08.2014</span></div>
    </div>
  </footer>

  <section class="dialog" role="alertdialog" aria-labelledby="dlg-title" aria-describedby="dlg-text">
    <div class="dialog-head">
      <h2 id="dlg-title">LookStailorX</h2>
      <button class="dialog-close" aria-label="Close"><svg viewBox="0 0 20 20"><path d="M5 5l10 10M15 5L5 15" stroke="#fff" stroke-width="2.200"/></svg></button>
    </div>
    <div class="dialog-body">
      <div class="dialog-msg">
        <svg viewBox="0 0 32 32"><path d="M16 4L31 31H4z" fill="#333a50" opacity=".8"/><path d="M15 2q1-1 2 0l12 26q0 2-2 2H3q-2 0-2-2z" fill="url(#g-warn)" stroke="#a89400"/><path d="M12.500 12q0-3 2.700-3t2.700 3l-1.700 10h-2z" fill="#000"/><circle cx="15.200" cy="25.500" r="2.200" fill="#000"/></svg>
        <p id="dlg-text">The seam allowance of a pattern cannot be created. Please check the pattern.</p>
      </div>
      <button class="ok">OK</button>
    </div>
  </section>

</div>
</div>
</body>
</html>
```
FILE: styles.css
```css
* { box-sizing: border-box; }

body {
  margin: 0;
  background: #fff;
  font: 11px/14px "DejaVu Sans Condensed", "DejaVu Sans", sans-serif;
  color: #000;
}

button {
  margin: 0;
  padding: 0;
  border: 0;
  background: none;
  font: inherit;
  color: inherit;
}

h1, h2, p { margin: 0; }
svg { display: block; }
.defs { position: absolute; width: 0; height: 0; }

.screen {
  display: grid;
  grid-template-columns: minmax(0, 1280fr) minmax(0, 889fr);
}

.desktop {
  position: relative;
  background: #e0dfe3;
}

/* Title bar */
.titlebar {
  display: flex;
  align-items: center;
  height: 25px;
  padding: 0 2px;
  background: linear-gradient(#c8c9d6 0, #f4f4f8 2px, #d6d6e0 5px, #dcdce5 12px, #fbfbfd 21px, #fff 23px, #cfcfdc 25px);
}
.s16 { width: 16px; height: 16px; }
.title {
  flex: 1;
  padding-left: 10px;
  font-size: 12px;
  line-height: 16px;
  white-space: pre;
  color: #a2a1a6;
}
.winbtns { display: flex; gap: 2px; }
.winbtn {
  width: 21px;
  height: 21px;
  border: 1px solid #a9a9bb;
  border-radius: 3px;
  background: linear-gradient(135deg, #f6f6fa, #c9c9d6);
}
.winbtn svg { width: 19px; height: 19px; }
.winbtn-close { background: linear-gradient(135deg, #eab9b9, #d89494); border-color: #c9a2ac; }

/* Menu */
.menubar {
  display: flex;
  gap: 12px;
  height: 21px;
  padding: 0 5px;
  color: #a5a3a0;
  background: #dfe0e8;
}

/* Horizontal toolbars */
.toolbar {
  display: flex;
  height: 34px;
  border-top: 1px solid #9a999e;
  border-bottom: 1px solid #9a999e;
  box-shadow: inset 0 1px #fff;
}
.toolbar-second { height: 32px; border: 0; padding-left: 1px; }
.grip {
  width: 3px;
  margin: 2px 1px 0 2px;
  border-left: 1px solid #fff;
  border-right: 1px solid #9a999e;
}
.divider {
  width: 9px;
  margin: 2px 1px 0;
  border: solid #9a999e;
  border-width: 0 1px;
  box-shadow: inset 2px 0 #fff, inset -2px 0 #fff;
}
.edge {
  width: 2px;
  margin: 1px 0 0 2px;
  border-left: 1px solid #9a999e;
  border-right: 1px solid #fff;
}
.tb {
  display: flex;
  align-items: center;
  justify-content: center;
  flex: none;
  width: 31px;
  height: 31px;
}
.tb svg { width: 24px; height: 24px; fill: none; overflow: visible; }
.tb-drop { width: 14px; }
.tb-drop svg { width: 14px; }
.tb-on {
  border: 1px solid #8f8f94;
  border-right-color: #fff;
  border-bottom-color: #fff;
  background: #f3f3f5;
}
.tb-text { font: 28px/31px "Liberation Serif", serif; color: #1c2cb4; }
.gray { color: #969696; }
.navy { color: #123c6e; }
.blue { color: #2f78cc; }
.red { color: #df3b35; }
.tp { font-size: 9px; fill: #000; }
.num { font-size: 10px; fill: #777; text-anchor: middle; }
.axis { font-size: 8px; font-weight: bold; fill: #30304a; }
.vk { font: bold 11px "Liberation Sans", sans-serif; fill: #3c5f88; text-anchor: middle; }

/* Work area */
.work { display: flex; align-items: stretch; }
.sidebar {
  flex: none;
  width: 31px;
  padding-top: 2px;
}
.sidebar-left { width: 33px; padding-right: 2px; box-shadow: inset -1px 0 #fff; }
.sidebar-left .tb { width: 30px; }
.sgrip {
  display: block;
  height: 4px;
  margin-bottom: 2px;
  border-top: 1px solid #fff;
  border-bottom: 1px solid #9a999e;
}
.sidebar hr {
  height: 2px;
  margin: 2px;
  border: 0;
  border-top: 1px solid #9a999e;
  border-bottom: 1px solid #fff;
}
.sedge {
  display: block;
  height: 2px;
  border-top: 1px solid #9a999e;
  border-bottom: 1px solid #fff;
}
.center {
  flex: 1;
  min-width: 0;
  padding-left: 1px;
  border-left: 2px solid #fff;
  border-right: 1px solid #808084;
  border-top: 2px solid #fff;
}
.views {
  display: grid;
  grid-template-columns: minmax(0, 602fr) minmax(0, 607fr);
  gap: 3px;
  padding-top: 3px;
}
.view {
  width: 100%;
  height: auto;
  background: #d4d4d4;
}
.view-3d {
  border: 1px solid #fff;
  border-top-color: #000;
  border-left-color: #000;
}
.view-2d { border: 3px solid #f6f13c; }
.knots { fill: none; stroke: #b5301a; stroke-width: 4; stroke-linecap: square; }
.notes { fill: none; stroke: #7a4e28; stroke-width: 14; stroke-linecap: square; }

.tabs {
  display: flex;
  align-items: flex-start;
  height: 22px;
  margin-left: -2px;
  border-top: 1px solid #808084;
}
.tab {
  height: 20px;
  width: 60px;
  border: 1px solid #fff;
  border-top: 0;
  border-right-color: #77777c;
  border-bottom-color: #77777c;
}
.tab-on { height: 22px; width: 66px; }

/* Status bar */
.status {
  display: flex;
  gap: 3px;
  height: 19px;
  padding: 3px 0 0;
}
.cell {
  display: flex;
  height: 16px;
  padding-left: 1px;
  border: 1px solid #fff;
  border-top-color: #9a999e;
  border-left-color: #9a999e;
}
.cell-wide { flex: 1; }
.cell-layer { width: 131px; gap: 15px; padding-left: 6px; white-space: pre; }
.cell-pos { width: 65px; }

/* Taskbar */
.taskbar {
  display: flex;
  height: 60px;
  border-top: 1px solid #fff;
  background: linear-gradient(#7c7e90 0, #a6a8b8 4px, #b4b8c4 10px, #c0c8d0 24px, #c4ccd4 36px, #e9e9ee 52px, #e4e3e8 56px, #85868c 59px);
}
.start {
  display: flex;
  align-items: center;
  gap: 4px;
  width: 97px;
  height: 30px;
  padding-left: 10px;
  border-radius: 0 10px 12px 0;
  background: linear-gradient(#5ea35e 0, #8fd080 3px, #4aa548 8px, #3c9a3c 20px, #47b347 25px, #2c7c30 30px);
  box-shadow: inset -3px -1px 3px #28702c;
  color: #fff;
  font: italic bold 17px/24px "Liberation Sans", sans-serif;
  text-shadow: 1px 1px 1px #1d5a22;
}
.start svg { width: 20px; height: 20px; }
.quick {
  display: grid;
  grid-template-columns: 23px 23px 23px 16px;
  grid-template-rows: 30px 30px;
  align-items: center;
  align-content: start;
  width: 95px;
  margin-left: 11px;
}
.quick svg { width: 16px; height: 16px; }
.more { padding: 0 0 10px 4px; font-size: 13px; font-weight: bold; }
.tasks { display: flex; gap: 2px; padding-top: 4px; margin-left: -4px; }
.task {
  display: flex;
  align-items: center;
  gap: 3px;
  width: 158px;
  height: 24px;
  padding-left: 7px;
  border: 1px solid #9c9cae;
  border-radius: 3px;
  background: linear-gradient(#fff, #f1f1f5 50%, #cdcdd8);
  color: #3c3c44;
  white-space: nowrap;
}
.task svg { flex: none; width: 16px; height: 16px; }
.task-on {
  border-color: #5f6672;
  background: linear-gradient(#6c7482, #838b98);
  color: #fff;
}
.lang {
  align-self: center;
  margin: 0 13px 0 auto;
  padding: 0 1px;
  background: #b0b1b8;
}
.tray {
  display: flex;
  width: 132px;
  padding: 0 10px 0 9px;
  border-left: 2px solid #55566a;
  background: linear-gradient(#fff, #dcdce6 16px, #c9c9d8 34px, #bcbccc 52px, #e6e6ee 57px, #85868c 60px);
}
.trayicons {
  display: grid;
  grid-template-columns: 16px 16px;
  gap: 3px;
  padding-top: 3px;
  align-content: start;
}
.trayicons svg { width: 16px; height: 16px; }
.clock {
  flex: 1;
  display: flex;
  flex-direction: column;
  gap: 5px;
  padding-top: 4px;
  text-align: center;
}

/* Message box over the work area */
.dialog {
  position: absolute;
  left: 415px;
  top: 420px;
  width: 452px;
  padding: 0 2px 2px;
  border: 1px solid #5e5f78;
  border-radius: 6px 6px 0 0;
  background: #fff;
}
.dialog-head {
  display: flex;
  align-items: center;
  justify-content: space-between;
  height: 26px;
  margin: 0 -2px;
  padding: 2px 4px 0 4px;
  border-radius: 5px 5px 0 0;
  background: linear-gradient(#fff 0, #b0b0c4 4px, #b9b9cb 8px, #e3e3ec 17px, #fff 24px);
}
.dialog-head h2 { font-size: 12px; line-height: 16px; }
.dialog-close {
  width: 21px;
  height: 21px;
  border: 1px solid #8c2a3a;
  border-radius: 3px;
  background: linear-gradient(135deg, #e89090, #c23b48);
}
.dialog-close svg { width: 19px; height: 19px; }
.dialog-body {
  display: flex;
  flex-direction: column;
  align-items: center;
  padding: 11px 11px 11px 8px;
  border: 1px solid #77778c;
  background: #e0dfe3;
}
.dialog-msg {
  display: flex;
  gap: 20px;
  align-self: stretch;
}
.dialog-msg svg { flex: none; width: 32px; height: 32px; }
.dialog-msg p {
  padding-top: 9px;
  font-family: "Liberation Sans", Arial, sans-serif;
  white-space: nowrap;
}
.ok {
  width: 75px;
  height: 23px;
  margin-top: 16px;
  border: 1px solid #000;
  box-shadow: inset 1px 1px #fff, inset -1px -1px #77777c, inset -2px -2px #a8a8ae;
}
```
